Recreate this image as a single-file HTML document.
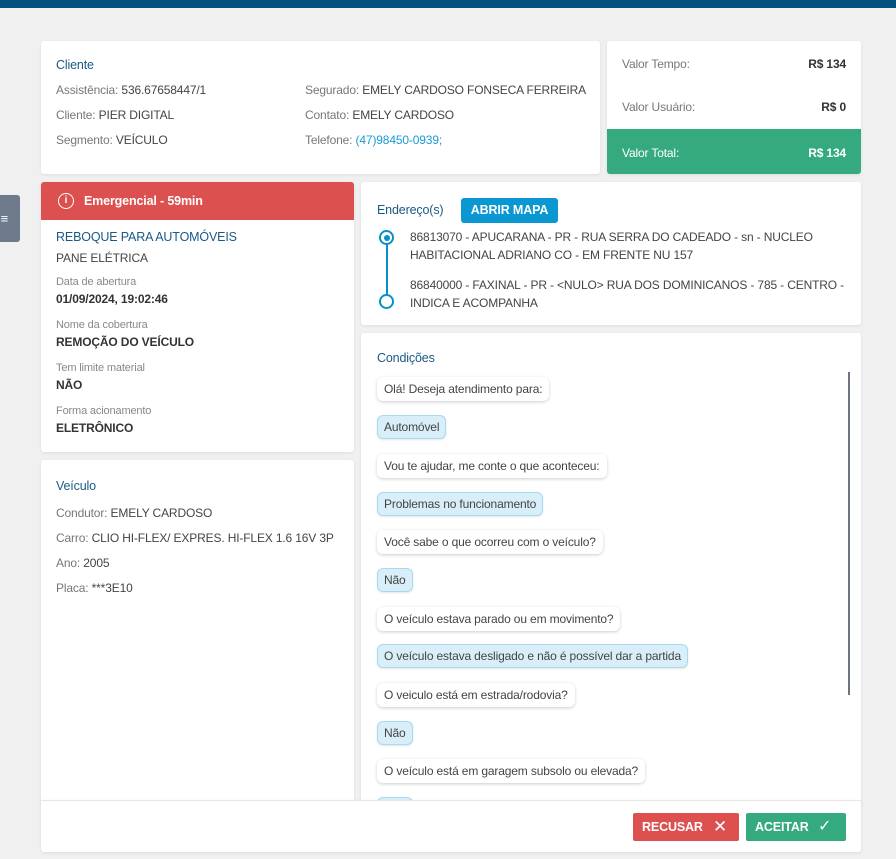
<!DOCTYPE html>
<html><head><meta charset="utf-8"><style>
*{margin:0;padding:0;box-sizing:border-box}
body{width:896px;height:859px;background:#f0f0f0;font-family:"Liberation Sans",sans-serif;font-size:12px;letter-spacing:-0.15px;color:#444;position:relative;overflow:hidden}
.card{position:absolute;background:#fff;border-radius:3px;box-shadow:0 1px 3px rgba(0,0,0,.08)}
.t{position:absolute;white-space:nowrap}
.h{color:#1a5a85;font-size:12.5px}
.g{color:#777}
.lbl{color:#888;font-size:11px}
.b{font-weight:bold;color:#333}
.bub{position:absolute;left:16px;padding:5px 7px;background:#fff;border-radius:6px;box-shadow:0 1px 3px rgba(0,0,0,.2);white-space:nowrap;font-size:12px;color:#444}
.ans{background:#d8eef8;border:1px solid #a9d9ef;box-shadow:0 1px 2px rgba(0,0,0,.1);padding:4px 6px}
</style></head><body>
<div style="position:absolute;left:0;top:0;width:896px;height:8px;background:#03517d"></div>
<div style="position:absolute;left:0;top:195px;width:20px;height:47px;background:#6c7a8c;border-radius:0 3px 3px 0;color:#fff;font-size:13px;line-height:47px;text-align:right;padding-right:12px">≡</div>

<div class="card" style="left:41px;top:41px;width:559px;height:133px">
<div class="t h" style="left:15px;top:17px">Cliente</div>
<div class="t g" style="left:15px;top:42px">Assistência: <span style="color:#444">536.67658447/1</span></div>
<div class="t g" style="left:15px;top:67px">Cliente: <span style="color:#444">PIER DIGITAL</span></div>
<div class="t g" style="left:15px;top:92px">Segmento: <span style="color:#444">VEÍCULO</span></div>
<div class="t g" style="left:264px;top:42px">Segurado: <span style="color:#444">EMELY CARDOSO FONSECA FERREIRA</span></div>
<div class="t g" style="left:264px;top:67px">Contato: <span style="color:#444">EMELY CARDOSO</span></div>
<div class="t g" style="left:264px;top:92px">Telefone: <span style="color:#1a9ad6">(47)98450-0939;</span></div>
</div>

<div class="card" style="left:607px;top:41px;width:254px;height:133px;overflow:hidden">
<div class="t g" style="left:15px;top:16px">Valor Tempo:</div>
<div class="t b" style="right:15px;top:16px">R$ 134</div>
<div class="t g" style="left:15px;top:59px">Valor Usuário:</div>
<div class="t b" style="right:15px;top:59px">R$ 0</div>
<div style="position:absolute;left:0;top:88px;width:254px;height:45px;background:#36aa7f"></div>
<div class="t" style="left:15px;top:105px;color:#fff">Valor Total:</div>
<div class="t" style="right:15px;top:105px;color:#fff;font-weight:bold">R$ 134</div>
</div>

<div class="card" style="left:41px;top:182px;width:313px;height:270px;overflow:hidden">
<div style="position:absolute;left:0;top:0;width:313px;height:38px;background:#dc5150"></div>
<div style="position:absolute;left:17px;top:11px;width:16px;height:16px;border:1.5px solid #fff;border-radius:50%;color:#fff;font-size:10px;line-height:13px;text-align:center;font-weight:bold">i</div>
<div class="t" style="left:43px;top:12px;color:#fff;font-weight:bold;font-size:12.5px">Emergencial - 59min</div>
<div class="t h" style="left:15px;top:48px">REBOQUE PARA AUTOMÓVEIS</div>
<div class="t" style="left:15px;top:69px">PANE ELÉTRICA</div>
<div class="t lbl" style="left:15px;top:94px">Data de abertura</div>
<div class="t b" style="left:15px;top:110px">01/09/2024, 19:02:46</div>
<div class="t lbl" style="left:15px;top:137px">Nome da cobertura</div>
<div class="t b" style="left:15px;top:153px">REMOÇÃO DO VEÍCULO</div>
<div class="t lbl" style="left:15px;top:180px">Tem limite material</div>
<div class="t b" style="left:15px;top:196px">NÃO</div>
<div class="t lbl" style="left:15px;top:223px">Forma acionamento</div>
<div class="t b" style="left:15px;top:239px">ELETRÔNICO</div>
</div>

<div class="card" style="left:41px;top:460px;width:313px;height:345px">
<div class="t h" style="left:15px;top:19px">Veículo</div>
<div class="t g" style="left:15px;top:46px">Condutor: <span style="color:#444">EMELY CARDOSO</span></div>
<div class="t g" style="left:15px;top:71px">Carro: <span style="color:#444">CLIO HI-FLEX/ EXPRES. HI-FLEX 1.6 16V 3P</span></div>
<div class="t g" style="left:15px;top:96px">Ano: <span style="color:#444">2005</span></div>
<div class="t g" style="left:15px;top:121px">Placa: <span style="color:#444">***3E10</span></div>
</div>

<div class="card" style="left:361px;top:182px;width:500px;height:143px">
<div class="t h" style="left:16px;top:21px">Endereço(s)</div>
<div style="position:absolute;left:100px;top:16px;width:97px;height:25px;background:#0a97d2;border-radius:3px;color:#fff;font-weight:bold;font-size:12.5px;line-height:25px;text-align:center">ABRIR MAPA</div>
<div style="position:absolute;left:18px;top:48px;width:15px;height:15px;border:2px solid #0a8fcc;border-radius:50%"><div style="position:absolute;left:2.5px;top:2.5px;width:6px;height:6px;background:#0a8fcc;border-radius:50%"></div></div>
<div style="position:absolute;left:24.5px;top:62px;width:2px;height:52px;background:#0a8fcc"></div>
<div style="position:absolute;left:18px;top:112px;width:15px;height:15px;border:2px solid #0a8fcc;border-radius:50%;background:#fff"></div>
<div class="t" style="left:49px;top:46px;line-height:18px;white-space:normal;width:440px">86813070 - APUCARANA - PR - RUA SERRA DO CADEADO - sn - NUCLEO HABITACIONAL ADRIANO CO - EM FRENTE NU 157</div>
<div class="t" style="left:49px;top:94px;line-height:18px;white-space:normal;width:440px">86840000 - FAXINAL - PR - &lt;NULO&gt; RUA DOS DOMINICANOS - 785 - CENTRO - INDICA E ACOMPANHA</div>
</div>

<div class="card" style="left:361px;top:333px;width:500px;height:472px;overflow:hidden">
<div class="t h" style="left:16px;top:18px">Condições</div>
<div style="position:absolute;left:487px;top:39px;width:2px;height:323px;background:#6b7480"></div>
<div class="bub" style="top:44px">Olá! Deseja atendimento para:</div>
<div class="bub ans" style="top:82px">Automóvel</div>
<div class="bub" style="top:121px">Vou te ajudar, me conte o que aconteceu:</div>
<div class="bub ans" style="top:159px">Problemas no funcionamento</div>
<div class="bub" style="top:197px">Você sabe o que ocorreu com o veículo?</div>
<div class="bub ans" style="top:235px">Não</div>
<div class="bub" style="top:274px">O veículo estava parado ou em movimento?</div>
<div class="bub ans" style="top:311px">O veículo estava desligado e não é possível dar a partida</div>
<div class="bub" style="top:350px">O veiculo está em estrada/rodovia?</div>
<div class="bub ans" style="top:388px">Não</div>
<div class="bub" style="top:426px">O veículo está em garagem subsolo ou elevada?</div>
<div class="bub ans" style="top:464px">Não</div>
</div>

<div class="card" style="left:41px;top:800px;width:820px;height:52px;border-top:1px solid #e6e6e6;border-radius:0 0 3px 3px">
<div style="position:absolute;left:592px;top:12px;width:106px;height:28px;background:#dc5150;border-radius:2px;color:#fff;font-weight:bold;font-size:12.5px;line-height:28px;padding-left:9px">RECUSAR <span style="position:absolute;left:80px;top:0;font-weight:normal;font-size:17px">✕</span></div>
<div style="position:absolute;left:705px;top:12px;width:100px;height:28px;background:#36aa7f;border-radius:2px;color:#fff;font-weight:bold;font-size:12.5px;line-height:28px;padding-left:9px">ACEITAR <span style="position:absolute;left:72px;top:0;font-weight:normal;font-size:16px">✓</span></div>
</div>
</body></html>
